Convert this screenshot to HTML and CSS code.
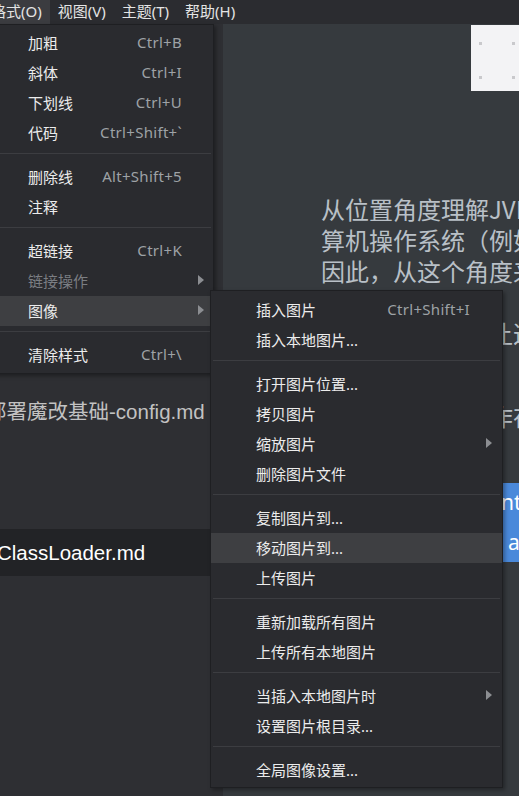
FILE: index.html
```html
<!DOCTYPE html>
<html lang="zh-CN">
<head>
<meta charset="utf-8">
<title>Typora</title>
<link rel="stylesheet" href="styles.css">
</head>
<body>
<div class="app">
  <nav class="menubar">
    <span class="menubar-item menubar-item--open">格式(O)</span>
    <span class="menubar-item">视图(V)</span>
    <span class="menubar-item">主题(T)</span>
    <span class="menubar-item">帮助(H)</span>
  </nav>

  <div class="workspace">
    <aside class="sidebar">
      <div class="file file--nested">部署魔改基础-config.md</div>
      <div class="file file--active">ClassLoader.md</div>
    </aside>

    <main class="editor">
      <div class="image-box">
        <svg class="image-dots" width="100" height="66" viewBox="0 0 100 66">
          <g fill="#c9c9cc">
            <rect x="8" y="17" width="3" height="3"/>
            <rect x="41" y="17" width="3" height="3"/>
            <rect x="74" y="17" width="3" height="3"/>
            <rect x="8" y="51" width="3" height="3"/>
            <rect x="41" y="51" width="3" height="3"/>
            <rect x="74" y="51" width="3" height="3"/>
          </g>
        </svg>
      </div>
      <div class="para">
        <span class="line">从位置角度理解JVM内存结构，要从</span>
        <span class="line">算机操作系统（例如Linux）的</span>
        <span class="line">因此，从这个角度来看，JVM</span>
        <span class="line">的内存结构。</span>
        <span class="line">理解这些区域可让这部分</span>
      </div>
      <div class="para para--second">
        <span class="line">内存区域的划分作在</span>
      </div>
      <div class="selection">
        <span class="sel-line sel-line--first">nt</span>
        <span class="sel-line sel-line--second">a</span>
      </div>
    </main>
  </div>

  <div class="menu menu--format">
    <div class="menu-item"><span class="menu-label">加粗</span><span class="menu-key">Ctrl+B</span><span class="menu-arrow"></span></div>
    <div class="menu-item"><span class="menu-label">斜体</span><span class="menu-key">Ctrl+I</span><span class="menu-arrow"></span></div>
    <div class="menu-item"><span class="menu-label">下划线</span><span class="menu-key">Ctrl+U</span><span class="menu-arrow"></span></div>
    <div class="menu-item"><span class="menu-label">代码</span><span class="menu-key">Ctrl+Shift+`</span><span class="menu-arrow"></span></div>
    <div class="menu-sep"></div>
    <div class="menu-item"><span class="menu-label">删除线</span><span class="menu-key">Alt+Shift+5</span><span class="menu-arrow"></span></div>
    <div class="menu-item"><span class="menu-label">注释</span><span class="menu-key"></span><span class="menu-arrow"></span></div>
    <div class="menu-sep"></div>
    <div class="menu-item"><span class="menu-label">超链接</span><span class="menu-key">Ctrl+K</span><span class="menu-arrow"></span></div>
    <div class="menu-item menu-item--disabled"><span class="menu-label">链接操作</span><span class="menu-key"></span><span class="menu-arrow menu-arrow--sub"></span></div>
    <div class="menu-item menu-item--hover"><span class="menu-label">图像</span><span class="menu-key"></span><span class="menu-arrow menu-arrow--sub"></span></div>
    <div class="menu-sep"></div>
    <div class="menu-item"><span class="menu-label">清除样式</span><span class="menu-key">Ctrl+\</span><span class="menu-arrow"></span></div>
  </div>

  <div class="menu menu--image">
    <div class="menu-item"><span class="menu-label">插入图片</span><span class="menu-key">Ctrl+Shift+I</span><span class="menu-arrow"></span></div>
    <div class="menu-item"><span class="menu-label">插入本地图片...</span><span class="menu-key"></span><span class="menu-arrow"></span></div>
    <div class="menu-sep"></div>
    <div class="menu-item"><span class="menu-label">打开图片位置...</span><span class="menu-key"></span><span class="menu-arrow"></span></div>
    <div class="menu-item"><span class="menu-label">拷贝图片</span><span class="menu-key"></span><span class="menu-arrow"></span></div>
    <div class="menu-item"><span class="menu-label">缩放图片</span><span class="menu-key"></span><span class="menu-arrow menu-arrow--sub"></span></div>
    <div class="menu-item"><span class="menu-label">删除图片文件</span><span class="menu-key"></span><span class="menu-arrow"></span></div>
    <div class="menu-sep"></div>
    <div class="menu-item"><span class="menu-label">复制图片到...</span><span class="menu-key"></span><span class="menu-arrow"></span></div>
    <div class="menu-item menu-item--hover"><span class="menu-label">移动图片到...</span><span class="menu-key"></span><span class="menu-arrow"></span></div>
    <div class="menu-item"><span class="menu-label">上传图片</span><span class="menu-key"></span><span class="menu-arrow"></span></div>
    <div class="menu-sep"></div>
    <div class="menu-item"><span class="menu-label">重新加载所有图片</span><span class="menu-key"></span><span class="menu-arrow"></span></div>
    <div class="menu-item"><span class="menu-label">上传所有本地图片</span><span class="menu-key"></span><span class="menu-arrow"></span></div>
    <div class="menu-sep"></div>
    <div class="menu-item"><span class="menu-label">当插入本地图片时</span><span class="menu-key"></span><span class="menu-arrow menu-arrow--sub"></span></div>
    <div class="menu-item"><span class="menu-label">设置图片根目录...</span><span class="menu-key"></span><span class="menu-arrow"></span></div>
    <div class="menu-sep"></div>
    <div class="menu-item"><span class="menu-label">全局图像设置...</span><span class="menu-key"></span><span class="menu-arrow"></span></div>
  </div>
</div>
</body>
</html>
```

FILE: styles.css
```css
* {
  box-sizing: border-box;
  margin: 0;
  padding: 0;
}

html,
body {
  height: 100%;
}

body {
  background: #363a3e;
  font-family: "Noto Sans", "Noto Sans CJK SC", sans-serif;
  overflow: hidden;
}

.app {
  position: relative;
  height: 796px;
  display: flex;
  flex-direction: column;
  overflow: hidden;
}

/* ---------- menubar ---------- */
.menubar {
  flex: none;
  height: 24px;
  background: #2b2c30;
  display: flex;
  align-items: stretch;
}

.menubar-item {
  display: flex;
  align-items: center;
  padding: 0 8px 1px;
  font-size: 15px;
  line-height: 1;
  color: #e4e4e4;
  white-space: nowrap;
}

.menubar-item--open {
  background: #3b3c40;
  margin-left: -17px;
}

/* ---------- workspace ---------- */
.workspace {
  flex: 1;
  display: flex;
  min-height: 0;
}

.sidebar {
  flex: none;
  width: 223px;
  background: #2e2f33;
  padding-top: 364px;
  overflow: hidden;
  font-family: "Liberation Sans", "Noto Sans CJK SC", sans-serif;
  font-size: 20.5px;
}

.file {
  height: 47px;
  line-height: 47px;
  white-space: nowrap;
  color: #c2c2c2;
}

.file--nested {
  text-indent: -14px;
}

.file--active {
  margin-top: 94px;
  background: #222326;
  color: #ffffff;
  text-indent: -3px;
}

.editor {
  flex: 1;
  min-width: 0;
  overflow: hidden;
  padding: 1px 0 0 98px;
  font-family: "Noto Sans CJK SC", sans-serif;
  font-size: 24px;
  line-height: 31px;
  color: #b9c0c7;
}

.image-box {
  margin-left: 150px;
  width: 100px;
  height: 66px;
  background: #f3f3f5;
}

.image-dots {
  display: block;
}

.para {
  margin-top: 102px;
}

.para--second {
  margin-top: 52px;
}

.line {
  display: block;
  white-space: nowrap;
}

.selection {
  margin: 52px 0 0 140px;
  width: 300px;
  background: #4a89da;
  color: #ffffff;
  font-family: "Noto Sans", sans-serif;
  font-size: 21px;
  line-height: 39.5px;
}

.sel-line {
  display: block;
  white-space: nowrap;
}

.sel-line--first {
  padding-left: 40px;
}

.sel-line--second {
  padding-left: 47px;
}

/* ---------- menus ---------- */
.menu {
  position: absolute;
  background: #2a2b2f;
  border: 1px solid #1e1f22;
  box-shadow: 2px 2px 4px rgba(0, 0, 0, 0.35);
  font-size: 15px;
  color: #ececec;
}

.menu--format {
  left: -16px;
  top: 24px;
  width: 230px;
  padding: 3px 0;
}

.menu--image {
  left: 210px;
  top: 290px;
  width: 293px;
  padding: 4px 0 2px;
}

.menu-item {
  height: 30px;
  display: flex;
  align-items: center;
  padding: 0 9px 2px 43px;
  white-space: nowrap;
}

.menu--image .menu-item {
  padding: 0 10px 2px 45px;
}

.menu-label {
  flex: 1;
}

.menu-key {
  color: #9ea2a6;
  letter-spacing: 0.3px;
}

.menu-arrow {
  width: 22px;
  display: flex;
  justify-content: flex-end;
}

.menu-arrow--sub::after {
  content: "";
  width: 0;
  height: 0;
  border-left: 6px solid #8c8e92;
  border-top: 5px solid transparent;
  border-bottom: 5px solid transparent;
}

.menu-item--hover {
  background: #3e3f42;
}

.menu-item--disabled {
  color: #7b7e83;
}

.menu-sep {
  height: 1px;
  background: #3c3d41;
  margin: 5px 2px 8px;
}
```
